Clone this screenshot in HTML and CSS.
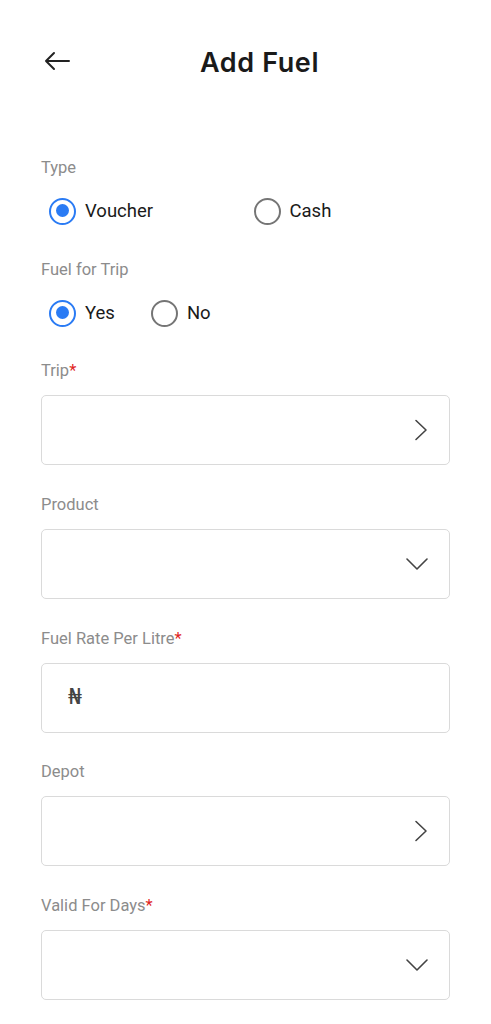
FILE: index.html
```html
<!DOCTYPE html>
<html>
<head>
<meta charset="utf-8">
<link rel="stylesheet" href="styles.css">
</head>
<body>
<div class="page">
  <header class="header">
    <button class="back" aria-label="Back">
      <svg width="26" height="20" viewBox="0 0 26 20"><path d="M25 10H2M10 2L2 10l8 8" fill="none" stroke="#222" stroke-width="2" stroke-linecap="round" stroke-linejoin="round"/></svg>
    </button>
    <h1 class="title">Add Fuel</h1>
  </header>

  <main class="form">
    <div class="label">Type</div>
    <div class="radios radios-grid">
      <label class="radio"><span class="circle checked"></span><span class="rtext">Voucher</span></label>
      <label class="radio"><span class="circle"></span><span class="rtext">Cash</span></label>
    </div>

    <div class="label">Fuel for Trip</div>
    <div class="radios radios-flex">
      <label class="radio"><span class="circle checked"></span><span class="rtext">Yes</span></label>
      <label class="radio"><span class="circle"></span><span class="rtext">No</span></label>
    </div>

    <div class="field">
      <div class="label flabel">Trip<span class="req">*</span></div>
      <div class="box"><span class="val"></span>
        <svg class="icon" width="14" height="22" viewBox="0 0 14 22"><path d="M2 1.5l10 9.5-10 9.5" fill="none" stroke="#444" stroke-width="1.6" stroke-linecap="round" stroke-linejoin="round"/></svg>
      </div>
    </div>

    <div class="field">
      <div class="label flabel">Product</div>
      <div class="box"><span class="val"></span>
        <svg class="icon" width="22" height="12" viewBox="0 0 22 12"><path d="M1 1l10 10 10-10" fill="none" stroke="#444" stroke-width="1.6" stroke-linecap="round" stroke-linejoin="round"/></svg>
      </div>
    </div>

    <div class="field">
      <div class="label flabel">Fuel Rate Per Litre<span class="req">*</span></div>
      <div class="box box-currency"><span class="naira">₦</span></div>
    </div>

    <div class="field">
      <div class="label flabel">Depot</div>
      <div class="box"><span class="val"></span>
        <svg class="icon" width="14" height="22" viewBox="0 0 14 22"><path d="M2 1.5l10 9.5-10 9.5" fill="none" stroke="#444" stroke-width="1.6" stroke-linecap="round" stroke-linejoin="round"/></svg>
      </div>
    </div>

    <div class="field">
      <div class="label flabel">Valid For Days<span class="req">*</span></div>
      <div class="box"><span class="val"></span>
        <svg class="icon" width="22" height="12" viewBox="0 0 22 12"><path d="M1 1l10 10 10-10" fill="none" stroke="#444" stroke-width="1.6" stroke-linecap="round" stroke-linejoin="round"/></svg>
      </div>
    </div>
  </main>
</div>
</body>
</html>
```

FILE: styles.css
```css
* { box-sizing: border-box; }
html, body { margin: 0; padding: 0; background: #fff; }
body { font-family: Roboto, "Noto Sans", sans-serif; color: #222; }

.page { width: 491px; }

.header {
  display: flex;
  align-items: center;
  height: 124px;
  padding: 0 0 0 44px;
}
.back {
  border: 0;
  background: none;
  padding: 0;
  width: 26px;
  height: 20px;
  display: flex;
  margin-top: -2px;
}
.title {
  margin: 0 0 0 130px;
  font-family: Inter, "Open Sans", sans-serif;
  font-weight: 600;
  font-size: 27px;
  letter-spacing: 0.6px;
  color: #1a1a1a;
  line-height: 1;
}

.form { padding: 34px 41px 0 41px; }

.label {
  font-size: 16.5px;
  line-height: 20px;
  color: #8c8c8c;
  font-weight: 400;
}
.req { color: #e02424; }

.radios { margin: 20px 0 0 0; height: 26px; }
.radios-grid { display: grid; grid-template-columns: 1fr 1fr; margin-bottom: 36px; }
.radios-flex { display: flex; gap: 28px; margin-bottom: 35px; }

.radio {
  display: flex;
  align-items: center;
  padding-left: 8px;
  height: 26px;
}
.circle {
  width: 27px;
  height: 27px;
  border-radius: 50%;
  border: 2.5px solid #757575;
  flex: none;
  position: relative;
}
.circle.checked { border-color: #2a7bf4; }
.circle.checked::after {
  content: "";
  position: absolute;
  left: 4.5px; top: 4.5px;
  width: 13px; height: 13px;
  border-radius: 50%;
  background: #2a7bf4;
}
.rtext {
  margin-left: 9px;
  font-size: 18.5px;
  color: #1a1a1a;
  line-height: 26px;
}

.field { margin-bottom: 29.8px; }
.flabel { margin-bottom: 14px; }

.box {
  height: 70px;
  border: 1px solid #dadada;
  border-radius: 5px;
  display: flex;
  align-items: center;
  justify-content: space-between;
  padding: 0 21px 0 26px;
}
.box-currency { justify-content: flex-start; }
.naira {
  font-size: 22px;
  color: #444;
  font-family: "DejaVu Sans", Roboto, sans-serif;
  margin-top: -2px;
}
.icon { display: block; }
```
